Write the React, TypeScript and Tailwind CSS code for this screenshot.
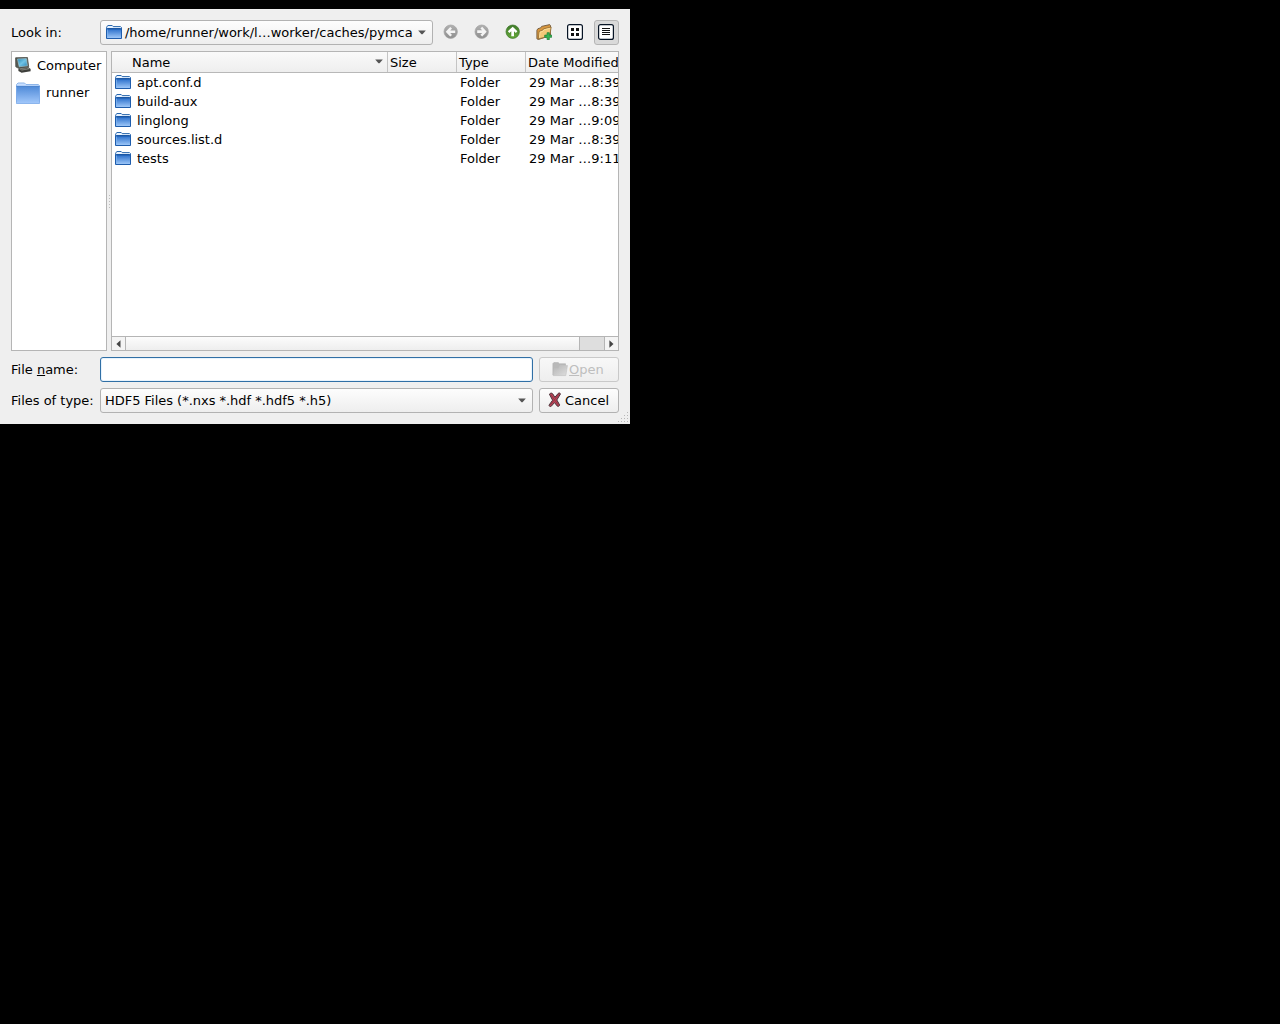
import React from "react";

const files = [
  { name: "apt.conf.d", date: "29 Mar …8:39" },
  { name: "build-aux", date: "29 Mar …8:39" },
  { name: "linglong", date: "29 Mar …9:09" },
  { name: "sources.list.d", date: "29 Mar …8:39" },
  { name: "tests", date: "29 Mar …9:11" },
];

function Gradients() {
  return (
    <svg width="0" height="0" className="absolute" aria-hidden="true">
      <defs>
        <linearGradient id="folder" x1="0" y1="0" x2="0" y2="1">
          <stop offset="0" stopColor="#2a6fcb" />
          <stop offset="1" stopColor="#a3cbfa" />
        </linearGradient>
        <linearGradient id="bigFolder" x1="0" y1="0" x2="0" y2="1">
          <stop offset="0" stopColor="#4f8ad8" />
          <stop offset="1" stopColor="#a2c8fb" />
        </linearGradient>
        <linearGradient id="screen" x1="0" y1="0" x2="1" y2="1">
          <stop offset="0" stopColor="#2586b4" />
          <stop offset="0.5" stopColor="#72c4e6" />
          <stop offset="1" stopColor="#2583b5" />
        </linearGradient>
        <linearGradient id="grayBall" x1="0" y1="0" x2="0" y2="1">
          <stop offset="0" stopColor="#b0b0b0" />
          <stop offset="1" stopColor="#8f8f8f" />
        </linearGradient>
        <linearGradient id="greenBall" x1="0" y1="0" x2="0" y2="1">
          <stop offset="0" stopColor="#3f7a2b" />
          <stop offset="1" stopColor="#65a83a" />
        </linearGradient>
        <linearGradient id="openFolder" x1="0" y1="0" x2="1" y2="1">
          <stop offset="0" stopColor="#b5b5b5" />
          <stop offset="1" stopColor="#dedede" />
        </linearGradient>
      </defs>
    </svg>
  );
}

function Folder() {
  return (
    <svg width="16" height="16" viewBox="0 0 16 16" className="mb-px shrink-0">
      <path d="M.6 13.4V3.2L1.8 1.5h4.4l1 1.1h7.3l1 1v9.8z" fill="#e8f3ff" stroke="#2866ad" />
      <path d="M.5 5h15v9.5H.5z" fill="url(#folder)" stroke="#1f5dac" />
      <path d="M1.2 4.5h13.6" stroke="#1b57a4" />
      <path d="M1.5 5.5v8.2" stroke="#81b4ef" strokeWidth=".7" />
    </svg>
  );
}

function BigFolder() {
  return (
    <svg width="24" height="24" viewBox="0 0 24 24" className="shrink-0">
      <path d="M.5 21V3.5L2 2h6.5L10 3.5h12.3l1.2 1.2V21z" fill="#c8dfff" stroke="#8eb6e9" />
      <path d="M.4 5.2h23.2v17.3H.4z" fill="url(#bigFolder)" stroke="#78a8e9" strokeWidth=".8" />
      <path d="M.5 5.5h23" stroke="#4e86cf" />
    </svg>
  );
}

function Computer() {
  return (
    <svg width="16" height="16" viewBox="0 0 16 16" className="shrink-0">
      <path d="M.6.8 12.4.4l1.3 9.4-10.2 1.5L.8 9.8z" fill="#565a54" stroke="#4a4d47" strokeWidth=".8" />
      <path d="m2.5 2 8.9-.4 1 7.2-8.2 1z" fill="url(#screen)" stroke="#a7c9d1" strokeWidth=".6" />
      <path d="m3.4 12.1 2.2-1.6 7.5-.6 2.5 2.2v2.1l-9 1.6-3.2-1.9z" fill="#3e3f3b" />
      <path d="m4.2 12 1.8-1 6.8-.6 2.2 1.7-8.2 1.5z" fill="#8d8f87" />
      <path d="m5.6 12.4 7-1" stroke="#4f504b" strokeWidth=".8" />
    </svg>
  );
}

function Arrow({ direction }: { direction: "left" | "right" | "up" }) {
  const up = direction === "up";
  const turn = direction === "left" ? 0 : direction === "right" ? 180 : 90;
  return (
    <svg width="16" height="16" viewBox="0 0 16 16">
      <circle cx="7.7" cy="7.7" r="6.7" fill={up ? "url(#greenBall)" : "url(#grayBall)"} stroke={up ? "#397622" : "#a2a2a2"} strokeWidth=".7" />
      <path d="M2.7 7.7 7.2 3l1.8 1.6-1.8 1.8h5v2.7h-5L9 11l-1.8 1.6z" fill={up ? "#fff" : "#f4f4f4"} transform={`rotate(${turn} 7.7 7.7)`} />
    </svg>
  );
}

function NewFolder() {
  return (
    <svg width="16" height="16" viewBox="0 0 16 16">
      <path d="M.9 14.8V6.2l1-1.5 2.7-.8 1-1.5 8.1-1.8.8 1v10L2.3 15.5z" fill="#d8973f" stroke="#6f583c" strokeWidth=".9" />
      <path d="m2.3 15 .9-7.7 3.3-1 1-1.4 7.7-1.9-1.5 8.9z" fill="#f3c878" stroke="#8e6a34" strokeWidth=".8" />
      <path d="m3.4 13.7.7-5.6 2.9-.9 1-1.4 5.9-1.5" fill="none" stroke="#ffe2a1" strokeWidth=".8" />
      <path d="M11.1 8.7h2.2v2.4h2.4v2.2h-2.4v2.4h-2.2v-2.4H8.7v-2.2h2.4z" fill="#37b552" stroke="#187c35" strokeWidth=".7" />
    </svg>
  );
}

function ViewIcon({ detail = false }: { detail?: boolean }) {
  return (
    <svg width="16" height="16" viewBox="0 0 16 16">
      <rect x=".6" y=".6" width="14.8" height="14.8" rx="2" fill="#fff" stroke="#071425" strokeWidth="1.2" />
      {detail ? (
        <path d="M4 4.5h8M4 6.5h8M4 8.5h8M4 10.5h8" stroke="#111" />
      ) : (
        <path d="M4 4h3v3H4zM9 4h3v3H9zM4 9h3v3H4zM9 9h3v3H9z" fill="#111" />
      )}
    </svg>
  );
}

function Caret() {
  return (
    <svg width="8" height="5" viewBox="0 0 8 5" className="shrink-0">
      <path d="M.2.5h7.6L4.5 4.3h-1z" fill="#555" />
    </svg>
  );
}

function OpenIcon() {
  return (
    <svg width="16" height="16" viewBox="0 0 16 16" className="mb-px shrink-0">
      <path d="M.9 14V2.6l1-1h4.3l1.3 1.2h6V14z" fill="#b9b9b9" stroke="#b0b0b0" strokeWidth=".6" />
      <path d="m1.3 14.6 1-6.8h4.2l1.5-3.3h7.5l-1.7 10.1z" fill="url(#openFolder)" stroke="#c2c2c2" strokeWidth=".6" />
    </svg>
  );
}

function CancelIcon() {
  return (
    <svg width="16" height="16" viewBox="0 0 16 16" className="mb-px shrink-0">
      <path d="M2.4 2.2C3.5.9 4.9.7 5.8 2l2.1 3.3 3.3-3.9c.8-.8 2.2-.4 2.2.7L9.8 8l2.8 4.8c.1 1.4-1.7 2.1-2.5 1.1L7.5 10.6l-3.2 3.6c-1 .9-2.7-.2-2.1-1.3L5.6 8.2z" fill="#b94658" stroke="#493239" strokeLinejoin="round" />
      <path d="m3.8 2.6 7.3 10.2M12 2.1 3.3 13" stroke="#963044" strokeWidth=".8" />
    </svg>
  );
}

const control = "flex h-[25px] items-center rounded-[3px] border border-[#b2b2b2] bg-linear-to-b from-[#fdfdfd] to-[#eeeeee]";
const tool = "flex size-[25px] items-start justify-start pt-1 pl-1";

export default function App() {
  return (
    <main className="h-screen overflow-hidden bg-black pt-[9px] font-['DejaVu_Sans',sans-serif] text-[13px] leading-[15px] text-black">
      <Gradients />
      <section className="relative flex h-[415px] w-[630px] flex-col gap-1.5 bg-[#efefef] px-[11px] pt-[11px]">
        <div className="flex h-[25px] shrink-0 items-center">
          <span className="w-[89px]">Look in:</span>
          <button className={`${control} w-[333px] pr-[6px] pl-[5px]`}>
            <Folder />
            <span className="ml-[3px] flex-1 text-left tracking-[-0.008px] whitespace-nowrap">/home/runner/work/l…worker/caches/pymca</span>
            <Caret />
          </button>
          <nav className="ml-1.5 flex gap-1.5">
            <button className={tool}><Arrow direction="left" /></button>
            <button className={tool}><Arrow direction="right" /></button>
            <button className={tool}><Arrow direction="up" /></button>
            <button className={tool}><NewFolder /></button>
            <button className={tool}><ViewIcon /></button>
            <button className="flex size-[25px] items-start justify-start rounded-[3px] border border-[#b5b5b5] bg-[#d9d9d9] pt-[3px] pl-[3px]"><ViewIcon detail /></button>
          </nav>
        </div>

        <div className="flex h-[300px] shrink-0">
          <aside className="w-24 border border-[#b5b5b5] bg-white">
            <div className="flex h-[26px] items-center pl-[3px]"><Computer /><span className="ml-1.5 tracking-[-0.04px]">Computer</span></div>
            <div className="flex h-[29px] items-center pl-1"><BigFolder /><span className="ml-1.5">runner</span></div>
          </aside>
          <div className="flex w-1 flex-col items-center justify-center gap-[2px]">
            {[0, 1, 2, 3, 4].map((dot) => <i key={dot} className="size-px bg-[#bdbdbd]" />)}
          </div>
          <div className="flex w-[508px] flex-col border border-[#b5b5b5] bg-white">
            <div className="flex h-[21px] shrink-0 overflow-hidden border-b border-[#b8b8b8] bg-linear-to-b from-[#fafafa] to-[#eeeeee] whitespace-nowrap">
              <div className="flex w-[276px] items-center justify-between border-r border-[#c4c4c4] pr-1 pl-5"><span>Name</span><span className="mb-[2px]"><Caret /></span></div>
              <div className="flex w-[69px] items-center border-r border-[#c4c4c4] pl-[2px]">Size</div>
              <div className="flex w-[69px] items-center border-r border-[#c4c4c4] pl-[2px]">Type</div>
              <div className="flex w-[92px] items-center overflow-hidden pl-[2px]">Date Modified</div>
            </div>
            <div className="flex-1">
              {files.map((file) => (
                <div key={file.name} className="flex h-[19px] items-center overflow-hidden whitespace-nowrap">
                  <div className="flex w-[348px] items-center pl-[3px]"><Folder /><span className="ml-1.5 tracking-[-0.02px]">{file.name}</span></div>
                  <span className="w-[69px]">Folder</span>
                  <span className="w-[89px] overflow-hidden">{file.date}</span>
                </div>
              ))}
            </div>
            <div className="flex h-[14px] shrink-0 border-t border-[#b5b5b5] bg-[#dedede]">
              <div className="flex w-[14px] items-center justify-center border-r border-[#b5b5b5] bg-[#f4f4f4]"><svg width="5" height="8" viewBox="0 0 5 8"><path d="M4.5.3v7.4L.4 4z" fill="#444" /></svg></div>
              <div className="w-[454px] border-r border-[#b5b5b5] bg-linear-to-b from-[#fcfcfc] to-[#eeeeee]" />
              <div className="flex-1" />
              <div className="flex w-[14px] items-center justify-center border-l border-[#b5b5b5] bg-[#f4f4f4]"><svg width="5" height="8" viewBox="0 0 5 8"><path d="M.4.3v7.4L4.5 4z" fill="#444" /></svg></div>
            </div>
          </div>
        </div>

        <div className="flex h-[25px] shrink-0 items-center">
          <label htmlFor="filename" className="w-[89px]">File <span className="underline underline-offset-1">n</span>ame:</label>
          <input id="filename" className="h-[25px] w-[433px] rounded-[3px] border border-[#306fa5] bg-white px-1 shadow-[inset_0_0_0_1px_#e7f3fd] outline-none" />
          <button disabled className="ml-1.5 flex h-[25px] w-20 items-center rounded-[3px] border border-[#c9c9c9] bg-linear-to-b from-[#f8f8f8] to-[#eeeeee] pl-3 text-[#bebebe]"><OpenIcon /><span className="ml-px"><span className="underline underline-offset-1">O</span>pen</span></button>
        </div>

        <div className="flex h-[25px] shrink-0 items-center">
          <span className="w-[89px]">Files of type:</span>
          <button className={`${control} w-[433px] justify-between pr-[6px] pl-1`}><span className="tracking-[-0.02px]">HDF5 Files (*.nxs *.hdf *.hdf5 *.h5)</span><Caret /></button>
          <button className={`${control} ml-1.5 w-20 pl-[7px]`}><CancelIcon /><span className="ml-[2px]">Cancel</span></button>
        </div>
        <svg className="absolute right-0 bottom-0" width="13" height="13">
          {[0, 1, 2, 3].flatMap((row) => Array.from({ length: row + 1 }, (_, col) => <rect key={`${row}-${col}`} x={10 - col * 3} y={1 + row * 3} width="1" height="1" fill="#b8b8b8" />))}
        </svg>
      </section>
    </main>
  );
}
